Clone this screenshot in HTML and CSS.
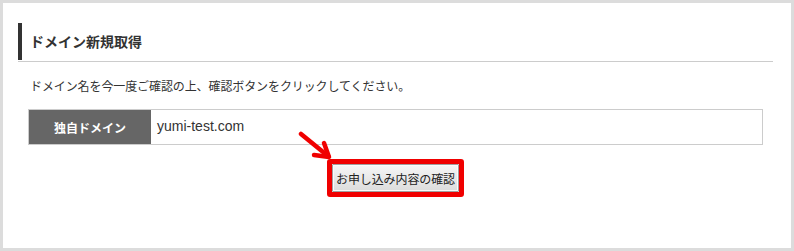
FILE: index.html
```html
<!DOCTYPE html>
<html lang="ja">
<head>
<meta charset="utf-8">
<link rel="stylesheet" href="styles.css">
</head>
<body>
<div class="frame">
  <h2 class="heading">ドメイン新規取得</h2>
  <p class="desc">ドメイン名を今一度ご確認の上、確認ボタンをクリックしてください。</p>
  <div class="table">
    <div class="label">独自ドメイン</div>
    <div class="value">yumi-test.com</div>
  </div>
  <div class="actions">
    <div class="highlight">
      <button class="btn" type="button">お申し込み内容の確認</button>
      <svg class="arrow" width="36" height="32" viewBox="0 0 36 32">
        <path d="M3 3 L30 25" stroke="#f00000" stroke-width="4.5" stroke-linecap="round" fill="none"/>
        <path d="M26 12 L31 26 L16 24" stroke="#f00000" stroke-width="4.5" stroke-linecap="round" stroke-linejoin="round" fill="none"/>
      </svg>
    </div>
  </div>
</div>
</body>
</html>
```

FILE: styles.css
```css
html, body {
  margin: 0;
  padding: 0;
  background: #ffffff;
}
body {
  font-family: "Noto Sans CJK JP", "Liberation Sans", sans-serif;
  color: #333333;
}
.frame {
  box-sizing: border-box;
  width: 794px;
  height: 251px;
  border: 3px solid #dcdcdc;
  padding: 20px 18px 0 15px;
}
.heading {
  margin: 0;
  height: 37px;
  border-left: 4px solid #333333;
  padding-left: 8px;
  font-size: 14px;
  font-weight: bold;
  line-height: 37px;
  color: #333333;
  position: relative;
}
.heading::after {
  content: "";
  position: absolute;
  left: -4px;
  right: 0;
  bottom: -2px;
  height: 1px;
  background: #cccccc;
}
.desc {
  margin: 0;
  padding: 17px 0 0 12px;
  height: 32px;
  font-size: 12px;
  line-height: 18px;
  letter-spacing: -0.1px;
  color: #333333;
}
.table {
  margin: 0 10px 0 10px;
  display: flex;
  height: 36px;
  box-sizing: border-box;
  border: 1px solid #cccccc;
}
.label {
  width: 122px;
  background: #666666;
  color: #ffffff;
  font-weight: bold;
  font-size: 12px;
  display: flex;
  align-items: center;
  justify-content: center;
}
.value {
  flex: 1;
  padding-left: 6px;
  font-family: "Liberation Sans", sans-serif;
  font-size: 14px;
  color: #333333;
  display: flex;
  align-items: center;
  padding-bottom: 2px;
}
.actions {
  margin: 14px 10px 0 10px;
  display: flex;
  justify-content: center;
}
.highlight {
  position: relative;
  box-sizing: border-box;
  width: 137px;
  height: 38px;
  border: 5px solid #f00000;
  border-radius: 3px;
  display: flex;
}
.btn {
  flex: 1;
  margin: 0;
  padding: 0;
  border: 1px solid #a0a0a0;
  border-radius: 1px;
  box-shadow: inset 0 0 0 1px #fbfbfb;
  background: linear-gradient(#f6f6f6, #dcdcdc);
  font-family: "Noto Sans CJK JP", sans-serif;
  font-size: 12px;
  color: #222222;
  letter-spacing: -0.1px;
}
.arrow {
  position: absolute;
  left: -34px;
  top: -33px;
}
```
